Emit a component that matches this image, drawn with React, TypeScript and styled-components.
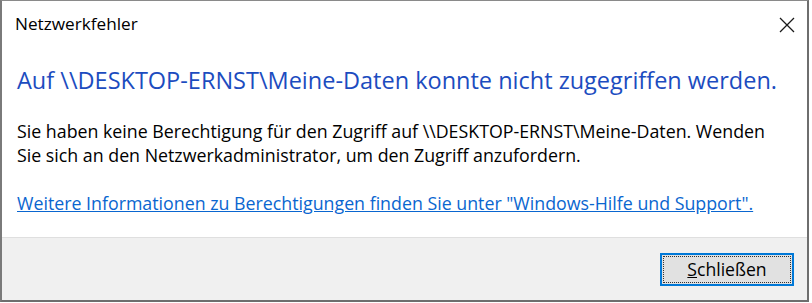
import React from 'react'
import { styled, createGlobalStyle } from 'styled-components'

const GlobalStyle = createGlobalStyle`
  html, body {
    margin: 0;
    padding: 0;
    background: #ffffff;
  }
  body {
    font-family: "Open Sans", "Noto Sans", sans-serif;
  }
`

export default function App() {
  return (
    <>
      <GlobalStyle />
      <Window>
        <TitleBar>
          <Title>Netzwerkfehler</Title>
          <CloseButton aria-label="Schließen">
            <svg width="16" height="16" viewBox="0 0 16 16">
              <path d="M1 1 L15 15 M15 1 L1 15" stroke="#1a1a1a" strokeWidth="1.3" fill="none" />
            </svg>
          </CloseButton>
        </TitleBar>
        <Content>
          <Heading>Auf \\DESKTOP-ERNST\Meine-Daten konnte nicht zugegriffen werden.</Heading>
          <Message>
            Sie haben keine Berechtigung für den Zugriff auf \\DESKTOP-ERNST\Meine-Daten. Wenden
            <br />
            Sie sich an den Netzwerkadministrator, um den Zugriff anzufordern.
          </Message>
          <HelpLink href="#">
            Weitere Informationen zu Berechtigungen finden Sie unter "Windows-Hilfe und Support".
          </HelpLink>
        </Content>
        <Footer>
          <DialogButton>
            <span>
              <u>S</u>chließen
            </span>
          </DialogButton>
        </Footer>
      </Window>
    </>
  )
}

const Window = styled.div`
  width: 809px;
  height: 302px;
  box-sizing: border-box;
  border: 1px solid #8a8a8a;
  border-left: 2px solid #7a7a7a;
  border-right: 2px solid #6e6e6e;
  border-bottom: 2px solid #6e6e6e;
  background: #ffffff;
  display: flex;
  flex-direction: column;
`

const TitleBar = styled.div`
  height: 50px;
  display: flex;
  align-items: flex-start;
  justify-content: space-between;
  padding: 13px 12px 0 13px;
  box-sizing: border-box;
`

const Title = styled.div`
  font-size: 17.2px;
  color: #000000;
  line-height: 20px;
`

const CloseButton = styled.div`
  width: 16px;
  height: 16px;
  margin-top: 2px;
`

const Content = styled.div`
  flex: 1;
  padding: 15px 16px 0 15px;
`

const Heading = styled.div`
  font-size: 23.5px;
  line-height: 28px;
  color: #1c4cbf;
  white-space: nowrap;
`

const Message = styled.div`
  margin-top: 25px;
  font-size: 17.8px;
  line-height: 24px;
  color: #000000;
  white-space: nowrap;
`

const HelpLink = styled.a`
  display: inline-block;
  margin-top: 24px;
  font-size: 17.8px;
  line-height: 24px;
  color: #0a66d0;
  text-decoration: underline;
  white-space: nowrap;
`

const Footer = styled.div`
  height: 63px;
  box-sizing: border-box;
  border-top: 1px solid #dfdfdf;
  background: #f0f0f0;
  display: flex;
  justify-content: flex-end;
  align-items: center;
  padding-right: 13px;
`

const DialogButton = styled.button`
  width: 134px;
  height: 33px;
  box-sizing: border-box;
  border: 2px solid #0078d7;
  background: #e1e1e1;
  padding: 1px;
  font-family: "Open Sans", "Noto Sans", sans-serif;
  font-size: 17.6px;
  color: #000000;
  display: flex;

  span {
    flex: 1;
    display: flex;
    align-items: center;
    justify-content: center;
    border: 1px dotted #333333;
  }

  u {
    text-decoration: underline;
  }
`
